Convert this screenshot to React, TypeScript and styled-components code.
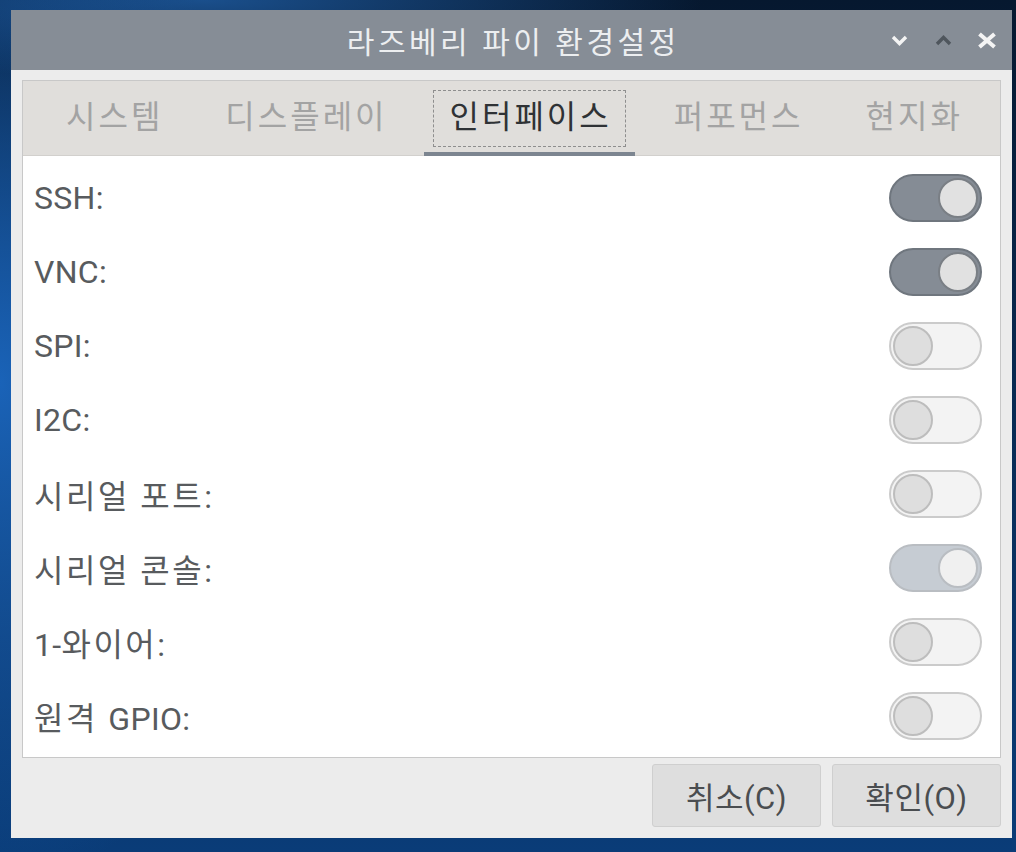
import type { ReactNode } from "react";
import styled, { createGlobalStyle } from "styled-components";

const Global = createGlobalStyle`
  html, body {
    margin: 0;
    padding: 0;
  }
  body {
    font-family: Roboto, "Noto Sans CJK KR", sans-serif;
  }
`;

const Desktop = styled.div`
  width: 1016px;
  height: 852px;
  box-sizing: border-box;
  padding: 10px 4px 14px 11px;
  background:
    radial-gradient(ellipse 300px 500px at 0% 45%, #1a63b8 0%, rgba(20, 80, 160, 0) 100%),
    radial-gradient(ellipse 500px 80px at 20% 0%, #1a4f8c 0%, rgba(20, 70, 130, 0) 100%),
    linear-gradient(180deg, #06182f 0%, #0a2f5c 60%, #0a3c78 100%);
  display: flex;
`;

const Window = styled.div`
  flex: 1;
  display: flex;
  flex-direction: column;
  background: #ececec;
`;

const TitleBar = styled.div`
  height: 60px;
  flex: none;
  background: #868d96;
  display: grid;
  grid-template-columns: 1fr auto 1fr;
  align-items: center;
`;

const Title = styled.div`
  grid-column: 2;
  color: #eceef0;
  font-size: 30px;
  letter-spacing: 3.5px;
  margin-right: -3.5px;
`;

const Controls = styled.div`
  grid-column: 3;
  justify-self: end;
  display: flex;
  align-items: center;
  padding-right: 3px;
`;

const CtlButton = styled.div`
  width: 44px;
  height: 30px;
  display: flex;
  align-items: center;
  justify-content: center;
`;

const Body = styled.div`
  flex: 1;
  display: flex;
  flex-direction: column;
  padding: 10px 11px 11px 11px;
`;

const Notebook = styled.div`
  flex: 1;
  display: flex;
  flex-direction: column;
  border: 1px solid #c8c8c8;
  background: #ffffff;
`;

const TabStrip = styled.div`
  height: 74px;
  flex: none;
  display: flex;
  align-items: stretch;
  gap: 13px;
  padding-left: 17px;
  background: #e0dedb;
  border-bottom: 1px solid #d2d0cd;
`;

const Tab = styled.div<{ $active?: boolean }>`
  position: relative;
  display: flex;
  align-items: center;
  padding: 0 9px;
  font-size: 32px;
  letter-spacing: 3px;
  color: ${(p) => (p.$active ? "#2f3235" : "#a3a3a3")};
  &::after {
    content: "";
    position: absolute;
    left: 0;
    right: 0;
    bottom: -1px;
    height: 4px;
    background: ${(p) => (p.$active ? "#7c8590" : "transparent")};
  }
`;

const TabText = styled.span<{ $focus?: boolean }>`
  padding: 9px 13px 11px 16px;
  border: 1px dashed ${(p) => (p.$focus ? "#8e8e8e" : "transparent")};
  line-height: 35px;
`;

const Page = styled.div`
  flex: 1;
  padding: 5px 18px 0 11px;
`;

const Row = styled.div`
  height: 74px;
  display: flex;
  align-items: center;
  justify-content: space-between;
`;

const Label = styled.div`
  font-size: 32px;
  letter-spacing: 0.3px;
  color: #585b5e;
`;

// hangul in the reference font runs wider than Noto CJK
const Ko = styled.span`
  letter-spacing: 2.5px;
`;

const Track = styled.div<{ $on: boolean; $dim?: boolean }>`
  width: 93px;
  height: 48px;
  box-sizing: border-box;
  border-radius: 24px;
  border: 2px solid
    ${(p) => (p.$dim ? "#b9bdc2" : p.$on ? "#6f767e" : "#cbcbcb")};
  background: ${(p) => (p.$dim ? "#c6ccd3" : p.$on ? "#858c95" : "#f3f3f3")};
  display: flex;
  align-items: center;
  justify-content: ${(p) => (p.$on ? "flex-end" : "flex-start")};
  padding: 0 2px;
`;

const Knob = styled.div<{ $on: boolean; $dim?: boolean }>`
  width: 40px;
  height: 40px;
  box-sizing: border-box;
  border-radius: 50%;
  background: ${(p) => (p.$dim ? "#f0f0f0" : p.$on ? "#e1e1e1" : "#dedede")};
  border: 2px solid ${(p) => (p.$dim ? "#b9bdc2" : p.$on ? "#7a7f85" : "#bdbdbd")};
`;

const ButtonRow = styled.div`
  display: flex;
  justify-content: flex-end;
  gap: 11px;
  padding-top: 6px;
`;

const Button = styled.div`
  width: 169px;
  height: 63px;
  box-sizing: border-box;
  border: 1px solid #cfcfcf;
  border-radius: 3px;
  background: #dedede;
  display: flex;
  align-items: center;
  justify-content: center;
  font-size: 31px;
  letter-spacing: 0.5px;
  color: #4a4d50;
`;

const Switch = ({ on, dim }: { on: boolean; dim?: boolean }) => (
  <Track $on={on} $dim={dim}>
    <Knob $on={on} $dim={dim} />
  </Track>
);

const rows: { key: string; label: ReactNode; on: boolean; dim?: boolean }[] = [
  { key: "ssh", label: "SSH:", on: true },
  { key: "vnc", label: "VNC:", on: true },
  { key: "spi", label: "SPI:", on: false },
  { key: "i2c", label: "I2C:", on: false },
  { key: "serial", label: <><Ko>시리얼 포트</Ko>:</>, on: false },
  { key: "console", label: <><Ko>시리얼 콘솔</Ko>:</>, on: true, dim: true },
  { key: "onewire", label: <>1-<Ko>와이어</Ko>:</>, on: false },
  { key: "gpio", label: <><Ko>원격 </Ko>GPIO:</>, on: false },
];

const tabs = ["시스템", "디스플레이", "인터페이스", "퍼포먼스", "현지화"];

const App = () => (
  <>
    <Global />
    <Desktop>
      <Window>
        <TitleBar>
          <Title>라즈베리 파이 환경설정</Title>
          <Controls>
            <CtlButton>
              <svg width="17" height="11" viewBox="0 0 17 11">
                <path d="M2 2 L8.5 8.5 L15 2" stroke="#f4f4f4" strokeWidth="3.4" fill="none" />
              </svg>
            </CtlButton>
            <CtlButton>
              <svg width="17" height="11" viewBox="0 0 17 11">
                <path d="M2 9 L8.5 2.5 L15 9" stroke="#4f565d" strokeWidth="3.4" fill="none" />
              </svg>
            </CtlButton>
            <CtlButton>
              <svg width="20" height="17" viewBox="0 0 20 17">
                <path d="M2.5 2 L17.5 15 M17.5 2 L2.5 15" stroke="#f4f4f4" strokeWidth="4" fill="none" />
              </svg>
            </CtlButton>
          </Controls>
        </TitleBar>
        <Body>
          <Notebook>
            <TabStrip>
              {tabs.map((t, i) => (
                <Tab key={t} $active={i === 2}>
                  <TabText $focus={i === 2}>{t}</TabText>
                </Tab>
              ))}
            </TabStrip>
            <Page>
              {rows.map((r) => (
                <Row key={r.key}>
                  <Label>{r.label}</Label>
                  <Switch on={r.on} dim={r.dim} />
                </Row>
              ))}
            </Page>
          </Notebook>
          <ButtonRow>
            <Button>취소(C)</Button>
            <Button>확인(O)</Button>
          </ButtonRow>
        </Body>
      </Window>
    </Desktop>
  </>
);

export default App;
